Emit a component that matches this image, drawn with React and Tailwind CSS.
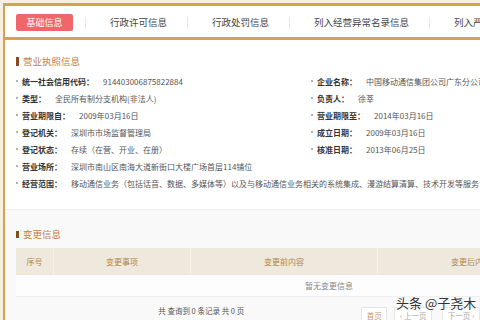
const tabs = ['行政许可信息', '行政处罚信息', '列入经营异常名录信息', '列入严重违法失信企业名单信息'];

const pairRows = [
  [['统一社会信用代码', '914403006875822884'], ['企业名称', '中国移动通信集团公司广东分公司']],
  [['类型', '全民所有制分支机构(非法人)'], ['负责人', '徐莘']],
  [['营业期限自', '2009年03月16日'], ['营业期限至', '2014年03月16日']],
  [['登记机关', '深圳市市场监督管理局'], ['成立日期', '2009年03月16日']],
  [['登记状态', '存续（在营、开业、在册）'], ['核准日期', '2013年06月25日']],
];

const wideRows = [
  ['营业场所', '深圳市南山区南海大道新街口大楼广场首层114铺位'],
  ['经营范围', '移动通信业务（包括话音、数据、多媒体等）以及与移动通信业务相关的系统集成、漫游结算清算、技术开发等服务'],
];

const Field = ({ label, value }) => (
  <div className="flex items-center h-[17px] whitespace-nowrap text-[8px] leading-[17px]">
    <span className="w-[2px] h-[2px] rounded-full bg-[#999] mr-[4px] -translate-y-[1px] shrink-0" />
    <span className="font-bold text-[#333]">{label}：</span>
    <span className="ml-[9px] text-[#555]">{value}</span>
  </div>
);

const Heading = ({ children, bar }) => (
  <div className="flex items-center h-[12px]">
    <span className={`w-[3px] ${bar} bg-[#8a4a1c] mr-[4px]`} />
    <span className="text-[9.5px] leading-[12px] text-[#c47d3c]">{children}</span>
  </div>
);

export default function App() {
  return (
    <div className="relative w-[480px] h-[320px] overflow-hidden bg-[#f7efe1] pl-[3px] pt-[3px] font-['Noto_Sans_CJK_SC','Noto_Sans',sans-serif]">
      <div className="h-full border-l-[2px] border-[#d6a24e] bg-white flex flex-col">
        {/* tab bar */}
        <div className="h-[37px] border-t-[3px] border-b-[3px] border-[#d6a24e] flex items-center whitespace-nowrap shrink-0">
          <div className="ml-[11px] mt-[2px] w-[57px] h-[17px] rounded-[2px] bg-[#f0676b] text-white text-[9px] leading-[17px] text-center shrink-0">
            基础信息
          </div>
          <div className="flex items-center mt-[2px] ml-[12px]">
            {tabs.map((t) => (
              <div key={t} className="flex items-center shrink-0">
                <span className="w-px h-[12px] bg-[#e6e6e6]" />
                <span className="pl-[24px] pr-[20px] text-[9.5px] text-[#444]">{t}</span>
              </div>
            ))}
          </div>
        </div>

        {/* 营业执照信息 */}
        <div className="pl-[11px] pt-[15px] pb-[17px] shrink-0">
          <Heading bar="h-[9px]">营业执照信息</Heading>
          <div className="mt-[6px]">
            {pairRows.map(([l, r]) => (
              <div key={l[0]} className="grid grid-cols-[295px_1fr]">
                <Field label={l[0]} value={l[1]} />
                <Field label={r[0]} value={r[1]} />
              </div>
            ))}
            {wideRows.map(([label, value]) => (
              <Field key={label} label={label} value={value} />
            ))}
          </div>
        </div>

        {/* 变更信息 */}
        <div className="flex-1 border-t border-[#eeeeee] bg-[#f9f9fa] pl-[11px] pt-[18px]">
          <Heading bar="h-[7px]">变更信息</Heading>
          <div className="mt-[8px] w-[626px]">
            <div className="flex h-[27px] bg-[#efe8dc] text-[8px] text-[#b2874c] whitespace-nowrap">
              <div className="w-[37px] flex items-center justify-center">序号</div>
              <div className="w-[137px] border-l border-[#f7f2ea] flex items-center justify-center">变更事项</div>
              <div className="w-[187px] border-l border-[#f7f2ea] flex items-center justify-center">变更前内容</div>
              <div className="w-[187px] border-l border-[#f7f2ea] flex items-center justify-center">变更后内容</div>
              <div className="flex-1 border-l border-[#f7f2ea]" />
            </div>
            <div className="h-[22px] bg-[#fdfdfd] border-b border-[#efefef] flex items-center justify-center text-[8px] text-[#888]">
              暂无变更信息
            </div>
          </div>
          <div className="flex items-start mt-[8px] whitespace-nowrap">
            <span className="ml-[116px] w-[139px] text-center text-[7.5px] leading-[12px] text-[#555]">
              共 查询到 0 条记录 共 0 页
            </span>
            <span className="ml-[91px] mt-[2px] w-[26px] h-[18px] border border-[#e6e6e6] bg-white text-[7.5px] leading-[16px] text-center text-[#c9946a]">首页</span>
            <span className="ml-[7px] mt-[2px] w-[38px] h-[18px] border border-[#e6e6e6] bg-white text-[7.5px] leading-[16px] text-center text-[#aaa]">‹ 上一页</span>
            <span className="ml-[10px] mt-[2px] w-[38px] h-[18px] border border-[#e6e6e6] bg-white text-[7.5px] leading-[16px] text-center text-[#aaa]">下一页 ›</span>
          </div>
        </div>
      </div>

      {/* watermark */}
      <div className="absolute left-[396px] top-[294px] text-[13px] leading-[18px] text-[#333] whitespace-nowrap [text-shadow:0_0_2px_#fff,0_0_2px_#fff]">
        头条 @子尧木
      </div>
    </div>
  );
}
